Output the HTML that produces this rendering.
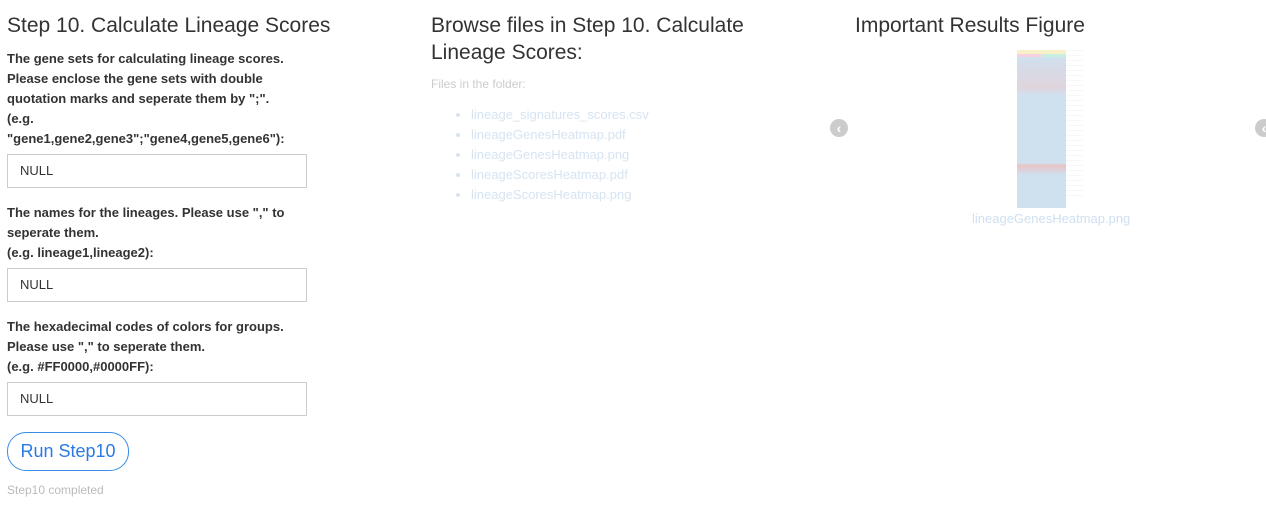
<!DOCTYPE html>
<html><head><style>
body{margin:0;width:1266px;height:509px;background:#fff;font-family:"Liberation Sans",sans-serif;color:#333;position:relative;overflow:hidden}
.a{position:absolute}
h2{font-weight:normal;font-size:21px;margin:0;line-height:27px;color:#333}
.lbl{font-weight:bold;font-size:13px;line-height:20px}
.inp{position:absolute;left:7px;border:1px solid #ccc;font-size:13px;line-height:32px;padding-left:12px;box-sizing:border-box;width:300px;height:34px}
.btn{left:7px;top:432px;border:1px solid #3a8ee6;border-radius:19px;color:#2a7ae2;font-size:18px;line-height:37px;text-align:center;box-sizing:border-box;width:122px;height:39px}
ul{margin:0;padding-left:40px;list-style:disc;color:#d6e4f2;font-size:13px;line-height:20px}
.arr{width:18px;height:18px;border-radius:50%;background:#ccc;color:#fff;font-size:14px;line-height:18px;text-align:center;font-weight:bold}
</style></head><body>
<h2 class="a" style="left:7px;top:12px">Step 10. Calculate Lineage Scores</h2>
<div class="a lbl" style="left:7px;top:49px;width:290px">The gene sets for calculating lineage scores. Please enclose the gene sets with double quotation marks and seperate them by ";".<br>(e.g.<br>"gene1,gene2,gene3";"gene4,gene5,gene6"):</div>
<div class="inp" style="top:154px">NULL</div>
<div class="a lbl" style="left:7px;top:203px;width:290px">The names for the lineages. Please use "," to seperate them.<br>(e.g. lineage1,lineage2):</div>
<div class="inp" style="top:268px">NULL</div>
<div class="a lbl" style="left:7px;top:317px;width:290px">The hexadecimal codes of colors for groups. Please use "," to seperate them.<br>(e.g. #FF0000,#0000FF):</div>
<div class="inp" style="top:382px">NULL</div>
<div class="a btn">Run Step10</div>
<div class="a" style="left:7px;top:483px;font-size:12px;color:#bbb">Step10 completed</div>

<h2 class="a" style="left:431px;top:12px;width:360px">Browse files in Step 10. Calculate Lineage Scores:</h2>
<div class="a" style="left:431px;top:77px;font-size:12px;color:#ccc">Files in the folder:</div>
<ul class="a" style="left:431px;top:105px"><li>lineage_signatures_scores.csv</li><li>lineageGenesHeatmap.pdf</li><li>lineageGenesHeatmap.png</li><li>lineageScoresHeatmap.pdf</li><li>lineageScoresHeatmap.png</li></ul>

<h2 class="a" style="left:855px;top:12px">Important Results Figure</h2>
<div class="a" style="left:1017px;top:50px;width:49px;height:4px;background:#f8f0c8"></div>
<div class="a" style="left:1017px;top:54px;width:49px;height:3px;background:linear-gradient(90deg,#f8d0e0 50%,#c8f0e0 50%)"></div>
<div class="a" style="left:1017px;top:57px;width:49px;height:151px;background:linear-gradient(180deg,#cfe0ee 0,#e0d4dc 20%,#cfe0ee 25%,#cfe0ee 70%,#e8c4c8 72%,#cfe0ee 78%,#cfe0ee)"></div>
<div class="a" style="left:1066px;top:50px;width:18px;height:150px;background:repeating-linear-gradient(180deg,#f7f7f7 0 1px,#fff 1px 5px)"></div>
<div class="a arr" style="left:830px;top:119px">‹</div>
<div class="a arr" style="left:1255px;top:119px">‹</div>
<div class="a" style="left:972px;top:211px;font-size:13px;color:#cfe0f1">lineageGenesHeatmap.png</div>
</body></html>
